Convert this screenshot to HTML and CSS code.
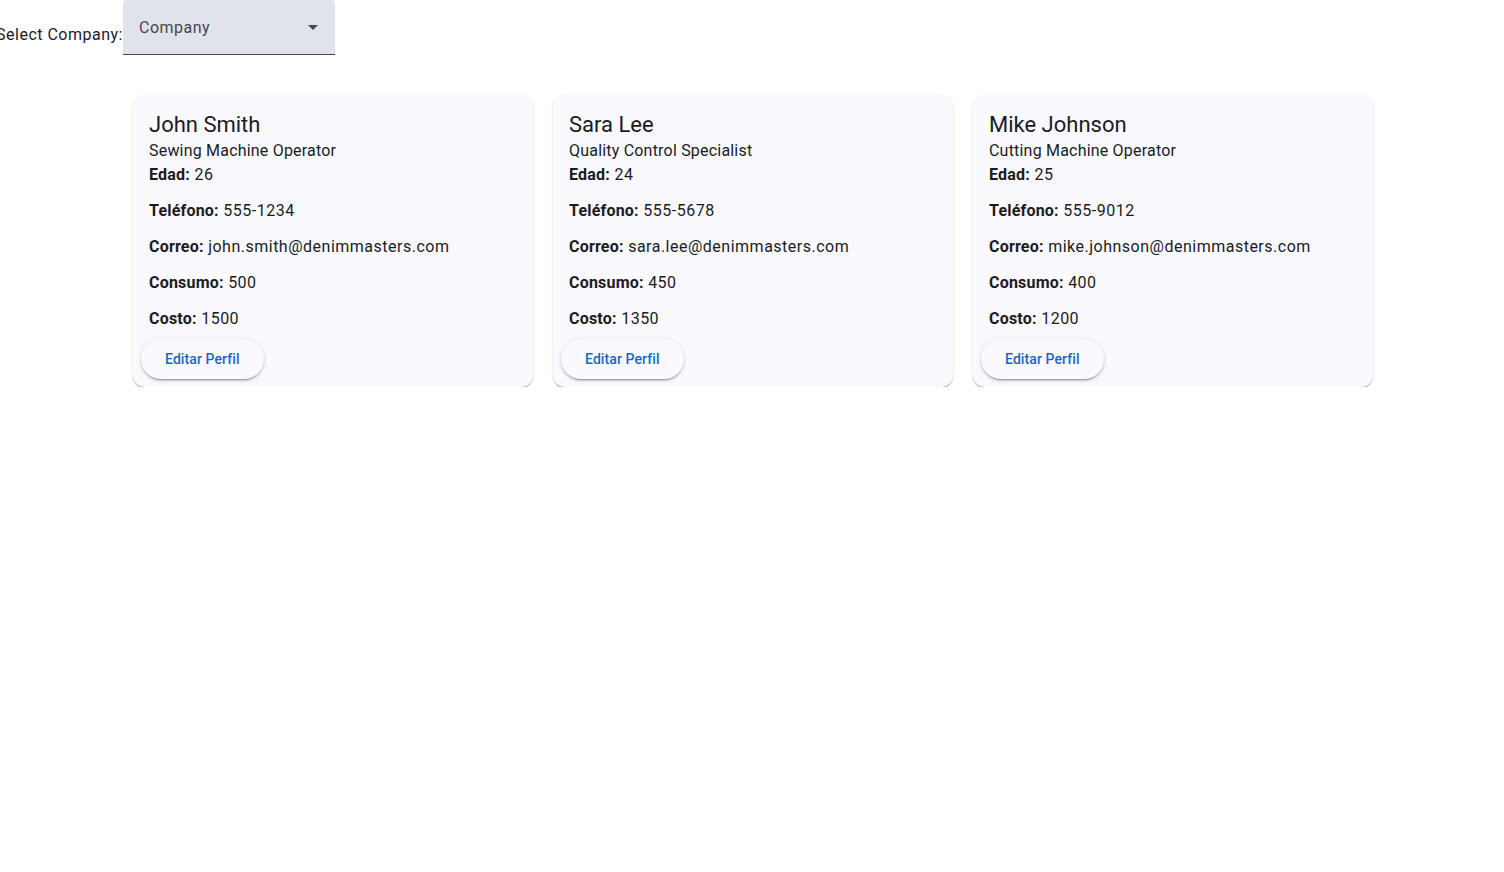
FILE: index.html
```html
<!DOCTYPE html>
<html lang="es">
<head>
<meta charset="utf-8">
<title>Employees</title>
<link rel="stylesheet" href="styles.css">
</head>
<body>
<div class="topbar">
  <div class="label-box"><span class="label">Select Company:</span></div>
  <div class="select">
    <span class="select-text">Company</span>
    <svg class="arrow" width="24" height="24" viewBox="0 0 24 24"><path d="M7 10l5 5 5-5z" fill="#44474e"/></svg>
  </div>
</div>
<main class="cards">
  <section class="card">
    <div class="card-body">
      <h2 class="name">John Smith</h2>
      <div class="role">Sewing Machine Operator</div>
      <p class="field"><b>Edad:</b> 26</p>
      <p class="field"><b>Teléfono:</b> 555-1234</p>
      <p class="field"><b>Correo:</b> john.smith@denimmasters.com</p>
      <p class="field"><b>Consumo:</b> 500</p>
      <p class="field"><b>Costo:</b> 1500</p>
    </div>
    <div class="actions"><button class="btn">Editar Perfil</button></div>
  </section>
  <section class="card">
    <div class="card-body">
      <h2 class="name">Sara Lee</h2>
      <div class="role">Quality Control Specialist</div>
      <p class="field"><b>Edad:</b> 24</p>
      <p class="field"><b>Teléfono:</b> 555-5678</p>
      <p class="field"><b>Correo:</b> sara.lee@denimmasters.com</p>
      <p class="field"><b>Consumo:</b> 450</p>
      <p class="field"><b>Costo:</b> 1350</p>
    </div>
    <div class="actions"><button class="btn">Editar Perfil</button></div>
  </section>
  <section class="card">
    <div class="card-body">
      <h2 class="name">Mike Johnson</h2>
      <div class="role">Cutting Machine Operator</div>
      <p class="field"><b>Edad:</b> 25</p>
      <p class="field"><b>Teléfono:</b> 555-9012</p>
      <p class="field"><b>Correo:</b> mike.johnson@denimmasters.com</p>
      <p class="field"><b>Consumo:</b> 400</p>
      <p class="field"><b>Costo:</b> 1200</p>
    </div>
    <div class="actions"><button class="btn">Editar Perfil</button></div>
  </section>
</main>
</body>
</html>
```
FILE: styles.css
```css
* { box-sizing: border-box; }
html, body { margin: 0; padding: 0; background: #ffffff; }
body {
  font-family: Roboto, "Liberation Sans", Arial, sans-serif;
  color: #000;
  -webkit-font-smoothing: antialiased;
}
.topbar {
  display: flex;
  align-items: flex-start;
  height: 55px;
}
.label-box {
  width: 123px;
  flex-shrink: 0;
  display: flex;
  justify-content: flex-end;
  padding-top: 23px;
}
.label {
  white-space: nowrap;
  font-size: 16px;
  line-height: 24px;
  letter-spacing: 0.03125em;
  color: #1b1b1f;
}
.select {
  width: 212px;
  height: 55px;
  background: #e0e2ec;
  border-bottom: 1px solid #44474e;
  border-radius: 4px 4px 0 0;
  display: flex;
  align-items: center;
  justify-content: space-between;
  padding: 0 10px 0 16px;
}
.select-text {
  font-size: 16px;
  line-height: 24px;
  letter-spacing: 0.03125em;
  color: #44474e;
  margin-top: 2px;
}
.arrow { display: block; margin-top: -1px; }
.cards {
  display: flex;
  justify-content: center;
  gap: 20px;
  padding: 40px 0 0 2px;
}
.card {
  width: 400px;
  background: #f9f9fe;
  border-radius: 12px;
  box-shadow: 0 2px 1px -1px rgba(0,0,0,0.2), 0 1px 1px 0 rgba(0,0,0,0.14), 0 1px 3px 0 rgba(0,0,0,0.12);
}
.card-body { padding: 16px 16px 0; }
.name {
  margin: 0;
  font-size: 22px;
  line-height: 28px;
  font-weight: 400;
  letter-spacing: 0;
  color: #1b1b1f;
}
.role {
  font-size: 16px;
  line-height: 24px;
  letter-spacing: 0.0125em;
  color: #1b1b1f;
}
.field {
  margin: 0 0 12px;
  font-size: 16px;
  line-height: 24px;
  letter-spacing: 0.03125em;
  color: #1b1b1f;
}
.field:last-child { margin-bottom: 0; }
.field b { font-weight: 700; letter-spacing: 0.0125em; }
.actions { padding: 8px 8px 8px; display: flex; }
.btn {
  height: 40px;
  padding: 0 24px;
  border: none;
  border-radius: 20px;
  background: #f9f9fe;
  color: #1867c0;
  font-family: Roboto, "Liberation Sans", Arial, sans-serif;
  font-size: 14px;
  font-weight: 500;
  letter-spacing: 0.00714em;
  box-shadow: 0 3px 1px -2px rgba(0,0,0,0.2), 0 2px 2px 0 rgba(0,0,0,0.14), 0 1px 5px 0 rgba(0,0,0,0.12);
  cursor: pointer;
}
```
